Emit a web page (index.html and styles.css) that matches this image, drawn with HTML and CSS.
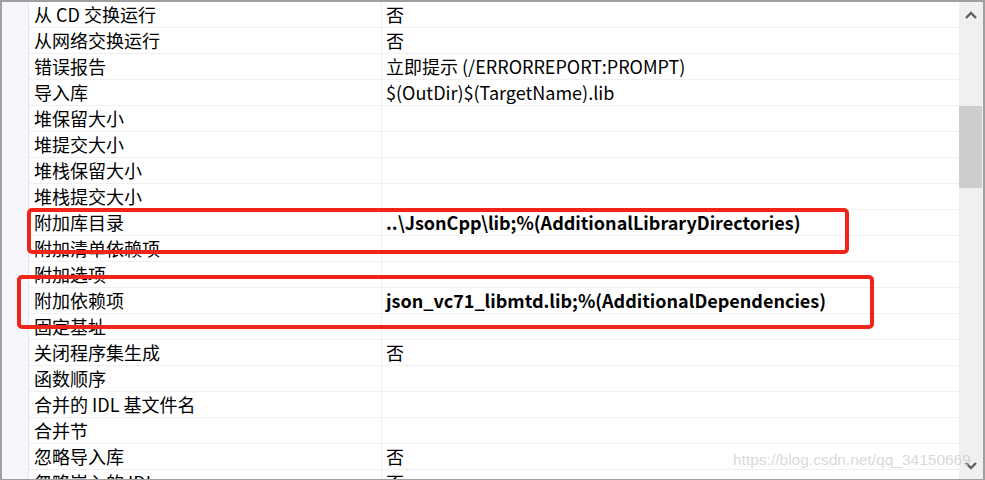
FILE: index.html
```html
<!DOCTYPE html>
<html>
<head>
<meta charset="utf-8">
<link rel="stylesheet" href="styles.css">
</head>
<body>
<div class="frame">
  <div class="gutter"></div>
  <div class="rows">
    <div class="row"><div class="name">从 CD 交换运行</div><div class="value">否</div></div>
    <div class="row"><div class="name">从网络交换运行</div><div class="value">否</div></div>
    <div class="row"><div class="name">错误报告</div><div class="value">立即提示 (/ERRORREPORT:PROMPT)</div></div>
    <div class="row"><div class="name">导入库</div><div class="value">$(OutDir)$(TargetName).lib</div></div>
    <div class="row"><div class="name">堆保留大小</div><div class="value"></div></div>
    <div class="row"><div class="name">堆提交大小</div><div class="value"></div></div>
    <div class="row"><div class="name">堆栈保留大小</div><div class="value"></div></div>
    <div class="row"><div class="name">堆栈提交大小</div><div class="value"></div></div>
    <div class="row"><div class="name">附加库目录</div><div class="value bold">..\JsonCpp\lib;%(AdditionalLibraryDirectories)</div></div>
    <div class="row"><div class="name">附加清单依赖项</div><div class="value"></div></div>
    <div class="row"><div class="name">附加选项</div><div class="value"></div></div>
    <div class="row"><div class="name">附加依赖项</div><div class="value bold">json_vc71_libmtd.lib;%(AdditionalDependencies)</div></div>
    <div class="row"><div class="name">固定基址</div><div class="value"></div></div>
    <div class="row"><div class="name">关闭程序集生成</div><div class="value">否</div></div>
    <div class="row"><div class="name">函数顺序</div><div class="value"></div></div>
    <div class="row"><div class="name">合并的 IDL 基文件名</div><div class="value"></div></div>
    <div class="row"><div class="name">合并节</div><div class="value"></div></div>
    <div class="row"><div class="name">忽略导入库</div><div class="value">否</div></div>
    <div class="row"><div class="name">忽略嵌入的 IDL</div><div class="value">否</div></div>
  </div>
  <div class="scrollbar">
    <div class="arrow">
      <svg width="14" height="10" viewBox="0 0 14 10"><path d="M2 8 L7 3 L12 8" fill="none" stroke="#606060" stroke-width="2.4"/></svg>
    </div>
    <div class="track-top"></div>
    <div class="thumb"></div>
    <div class="track-rest"></div>
    <div class="arrow">
      <svg width="14" height="10" viewBox="0 0 14 10"><path d="M2 2 L7 7 L12 2" fill="none" stroke="#606060" stroke-width="2.4"/></svg>
    </div>
  </div>
  <div class="mark mark-1"></div>
  <div class="mark mark-2"></div>
  <div class="watermark">https://blog.csdn.net/qq_34150669</div>
</div>
</body>
</html>
```
FILE: styles.css
```css
html, body {
  margin: 0;
  padding: 0;
  background: #ffffff;
}
.frame {
  position: relative;
  box-sizing: border-box;
  width: 985px;
  height: 480px;
  border-top: 2px solid #a0a0a0;
  border-left: 2px solid #a0a0a0;
  border-right: 2px solid #a0a0a0;
  border-bottom: 1px solid #a0a0a0;
  display: grid;
  grid-template-columns: 27px 930px 24px;
  overflow: hidden;
  font-family: "Noto Sans CJK SC", "Noto Sans", sans-serif;
  font-size: 18px;
  color: #000000;
}
.gutter {
  background: #f5f7fb;
  border-right: 1px solid #e6e6e6;
}
.rows {
  display: flex;
  flex-direction: column;
  overflow: hidden;
  min-height: 0;
}
.row {
  flex: 0 0 26px;
  box-sizing: border-box;
  height: 26px;
  border-bottom: 1px solid #f0f0f0;
  display: grid;
  grid-template-columns: 353px 1fr;
  line-height: 25px;
}
.name {
  box-sizing: border-box;
  border-right: 1px solid #f0f0f0;
  padding-left: 5px;
  white-space: nowrap;
}
.value {
  padding-left: 4px;
  white-space: nowrap;
}
.bold {
  font-weight: bold;
}
.scrollbar {
  background: #f0f0f0;
  display: flex;
  flex-direction: column;
}
.arrow {
  flex: 0 0 26px;
  display: flex;
  align-items: center;
  justify-content: center;
}
.track-top {
  flex: 0 0 78px;
}
.thumb {
  flex: 0 0 82px;
  background: #cdcdcd;
  margin-right: 1px;
}
.track-rest {
  flex: 1 1 auto;
}
.mark {
  position: absolute;
  border: 4px solid #f02418;
  border-radius: 5px;
  box-sizing: border-box;
}
.mark-1 {
  left: 25px;
  top: 206px;
  width: 822px;
  height: 46px;
}
.mark-2 {
  left: 15px;
  top: 273px;
  width: 857px;
  height: 54px;
}
.watermark {
  position: absolute;
  left: 731px;
  top: 449px;
  font-family: "Liberation Sans", Arial, sans-serif;
  font-size: 15.5px;
  color: rgba(200, 200, 200, 0.7);
  white-space: nowrap;
}
```
